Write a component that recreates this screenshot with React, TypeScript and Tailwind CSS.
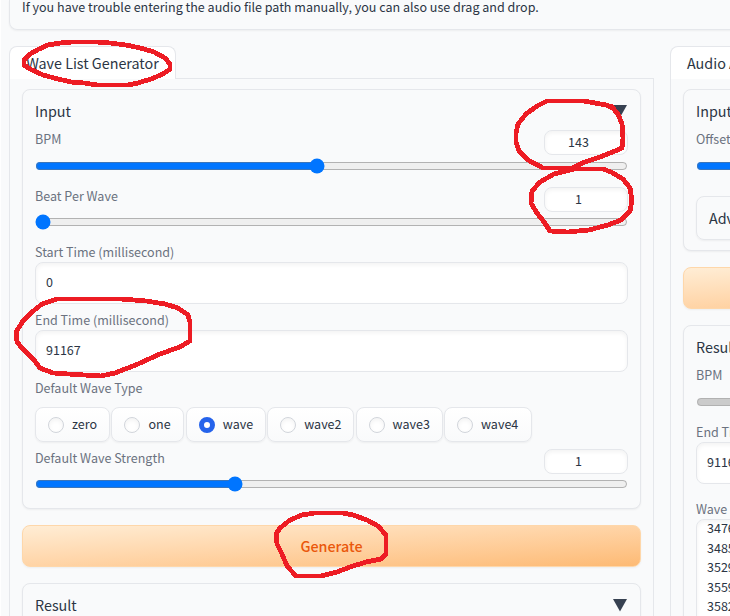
import type { ReactNode } from "react";

function Label({ children }: { children: ReactNode }) {
  return <span className="block whitespace-nowrap text-[12.54px] leading-[20px] text-[#6b7280]">{children}</span>;
}

function Title({ children, arrow }: { children: ReactNode; arrow?: boolean }) {
  return (
    <div className="flex h-6 items-center justify-between">
      <span className="pb-0.5 text-[14.33px] leading-6">{children}</span>
      {arrow && (
        <svg width="14" height="13" viewBox="0 0 14 13" className="mr-px mb-px">
          <path d="M0 0H14L7 12.5Z" fill="#374151" />
        </svg>
      )}
    </div>
  );
}

function Card({ children, className = "" }: { children?: ReactNode; className?: string }) {
  return (
    <div className={"rounded-lg border border-[#e5e7eb] bg-[#f9fafb] px-3 shadow-[0_1px_2px_0_rgba(0,0,0,0.05)] " + className}>
      {children}
    </div>
  );
}

function Range({ max, min, value, disabled }: { max: number; min: number; value: number; disabled?: boolean }) {
  return (
    <input
      type="range"
      min={min}
      max={max}
      defaultValue={value}
      disabled={disabled}
      className="block h-4 w-full accent-[#0075ff]"
    />
  );
}

function SliderHead({ label, value }: { label: string; value: string }) {
  return (
    <div className="flex h-6 justify-between">
      <div className="-mt-px">
        <Label>{label}</Label>
      </div>
      <div className="flex h-[25px] w-[84px] items-center justify-center rounded-lg border border-[#e5e7eb] bg-white pr-[15px] pb-0.5 text-[12.54px] leading-5 shadow-[inset_0_2px_4px_0_rgba(0,0,0,0.05)]">
        {value}
      </div>
    </div>
  );
}

function Field({ children }: { children: ReactNode }) {
  return (
    <div className="flex h-[42px] items-center rounded-lg border border-[#e5e7eb] bg-white px-2.5 pb-0.5 text-[12.54px] leading-5 shadow-[inset_0_2px_4px_0_rgba(0,0,0,0.05)]">
      {children}
    </div>
  );
}

const waveTypes = [
  { name: "zero", width: "w-[75px]" },
  { name: "one", width: "w-[73px]" },
  { name: "wave", width: "w-[80px]" },
  { name: "wave2", width: "w-[87px]" },
  { name: "wave3", width: "w-[87px]" },
  { name: "wave4", width: "w-[88px]" },
];

function WaveOption({ name, width, checked }: { name: string; width: string; checked: boolean }) {
  return (
    <div
      className={
        "flex h-[35px] items-center gap-2 rounded-lg border border-[#e5e7eb] bg-gradient-to-b from-white to-[#f9fafb] pl-3 text-[12.54px] leading-5 shadow-[0_1px_2px_0_rgba(0,0,0,0.05)] " +
        width
      }
    >
      {checked ? (
        <span className="size-4 shrink-0 rounded-full border-[5px] border-[#2563eb] bg-white" />
      ) : (
        <span className="size-4 shrink-0 rounded-full border border-[#d1d5db] bg-white shadow-[inset_0_2px_4px_0_rgba(0,0,0,0.05)]" />
      )}
      <span className="pb-px">{name}</span>
    </div>
  );
}

function Action({ children }: { children?: ReactNode }) {
  return (
    <div className="flex h-[42px] items-center justify-center rounded-lg border border-[#fed7aa] bg-gradient-to-br from-[#ffedd5] to-[#fdba74] text-[14.33px] font-medium leading-6 text-[#ea580c] shadow-[0_1px_2px_0_rgba(0,0,0,0.05)]">
      {children}
    </div>
  );
}

const strokes = [
  "M24 65L24 60L30 54L39 49L48 45L60 43L72 42L97 42L110 43L126 45L140 48L154 52L165 58L170 64L170 69L163 74L151 79L138 83L128 85L97 85L84 83L71 82L58 79L43 75L30 69Z",
  "M613 108L606 105L595 103L584 101L547 101L537 106L526 114L518 124L516 133L516 142L519 151L528 160L543 168L572 168L585 162L600 157L615 151L622 148L623 138L622 124L618 114L611 106",
  "M574 169L554 174L540 182L532 191L531 203L537 213L544 222L550 231L568 232L589 230L608 225L621 220L630 211L632 200L630 188L623 179L611 172L603 169Z",
  "M23 321L32 312L42 304L57 299L121 299L146 301L165 304L178 308L188 315L190 322L190 341L180 347L160 354L138 364L115 373L101 376L84 375L53 373L40 368L34 360L22 348L17 342L16 332Z",
  "M315 513L302 515L290 520L280 528L276 534L277 544L282 554L287 566L296 576L321 576L337 572L350 567L366 562L381 559L386 554L386 535L378 526L367 520L353 515L343 513Z",
];

export default function App() {
  return (
    <div className="relative h-[616px] w-[730px] overflow-hidden border-l border-white bg-[#f9fafb] pl-2 font-['Noto_Sans_CJK_SC',sans-serif] text-[#2b3544]">
      <div className="flow-root h-[30px] w-[760px] rounded-b-lg border border-t-0 border-[#e5e7eb] px-3 shadow-[0_1px_2px_0_rgba(0,0,0,0.05)]">
        <p className="-mt-[3px] text-[12.54px] leading-5">
          If you have trouble entering the audio file path manually, you can also use drag and drop.
        </p>
      </div>
      <div className="mt-4 flex w-[1400px] gap-4">
        <section className="w-[645px]">
          <div className="flex h-8">
            <div className="-mb-px flex h-[33px] w-[167px] items-center justify-center rounded-t-lg border border-b-0 border-[#e5e7eb] bg-white text-[14.33px] leading-6">
              Wave List Generator
            </div>
            <div className="mt-px h-8 flex-1 border-b border-[#e5e7eb]" />
          </div>
          <div className="h-[540px] border-x border-[#e5e7eb] px-3 pt-[11px]">
            <Card className="h-[420px] pt-[10px]">
              <Title arrow>Input</Title>
              <div className="mt-[6px]">
                <SliderHead label="BPM" value="143" />
              </div>
              <div className="mt-1">
                <Range min={1} max={300} value={143} />
              </div>
              <div className="mt-[13px]">
                <SliderHead label="Beat Per Wave" value="1" />
              </div>
              <div className="mt-[3px]">
                <Range min={1} max={32} value={1} />
              </div>
              <div className="mt-[12px]">
                <Label>Start Time (millisecond)</Label>
                <Field>0</Field>
              </div>
              <div className="mt-[6px]">
                <Label>End Time (millisecond)</Label>
                <Field>91167</Field>
              </div>
              <div className="mt-[6px]">
                <Label>Default Wave Type</Label>
                <div className="mt-[9px] flex gap-[1.4px]">
                  {waveTypes.map((w) => (
                    <WaveOption key={w.name} {...w} checked={w.name === "wave"} />
                  ))}
                </div>
              </div>
              <div className="mt-[7px]">
                <SliderHead label="Default Wave Strength" value="1" />
              </div>
              <div className="mt-[3px]">
                <Range min={0} max={3} value={1} />
              </div>
            </Card>
            <div className="mt-4">
              <Action>Generate</Action>
            </div>
            <Card className="mt-4 h-[60px] pt-[10px]">
              <Title arrow>Result</Title>
            </Card>
          </div>
        </section>
        <section className="w-[645px]">
          <div className="flex h-8">
            <div className="-mb-px flex h-[33px] w-[140px] items-center whitespace-nowrap rounded-t-lg border border-b-0 border-[#e5e7eb] bg-white pl-4 text-[14.33px] leading-6">
              Audio Analyzer
            </div>
            <div className="mt-px h-8 flex-1 border-b border-[#e5e7eb]" />
          </div>
          <div className="h-[540px] border-x border-[#e5e7eb] px-3 pt-[11px]">
            <Card className="h-[162px] pt-[10px]">
              <Title>Input</Title>
              <div className="mt-[5px]">
                <Label>Offset</Label>
              </div>
              <div className="mt-[9px]">
                <Range min={0} max={100} value={50} />
              </div>
              <div className="mt-[22px] flex h-11 items-center rounded-lg border border-[#e5e7eb] px-3 text-[14.33px] shadow-[0_1px_2px_0_rgba(0,0,0,0.05)]">
                Advanced
              </div>
            </Card>
            <div className="mt-4">
              <Action />
            </div>
            <Card className="mt-4 h-[400px] pt-[10px]">
              <Title>Result</Title>
              <div className="mt-[5px]">
                <Label>BPM</Label>
              </div>
              <div className="mt-[9px]">
                <Range min={0} max={300} value={143} disabled />
              </div>
              <div className="mt-[12px]">
                <Label>End Time (millisecond)</Label>
                <Field>91167</Field>
              </div>
              <div className="mt-[15px]">
                <Label>Wave List</Label>
                <div className="h-[130px] overflow-hidden rounded-lg border border-[#e5e7eb] bg-white px-2.5 text-[12.54px] leading-[19.6px] shadow-[inset_0_2px_4px_0_rgba(0,0,0,0.05)]">
                  <div className="-mt-0.5">
                    {["34760", "34850", "35290", "35590", "35820"].map((n) => (
                      <div key={n}>{n}</div>
                    ))}
                  </div>
                </div>
              </div>
            </Card>
          </div>
        </section>
      </div>
      <svg className="pointer-events-none absolute -left-px top-0" width="730" height="616" viewBox="0 0 730 616" shapeRendering="crispEdges">
        {strokes.map((d) => (
          <path key={d} d={d} fill="none" stroke="#ed1c24" strokeWidth="4.8" strokeLinejoin="round" strokeLinecap="round" />
        ))}
      </svg>
    </div>
  );
}
